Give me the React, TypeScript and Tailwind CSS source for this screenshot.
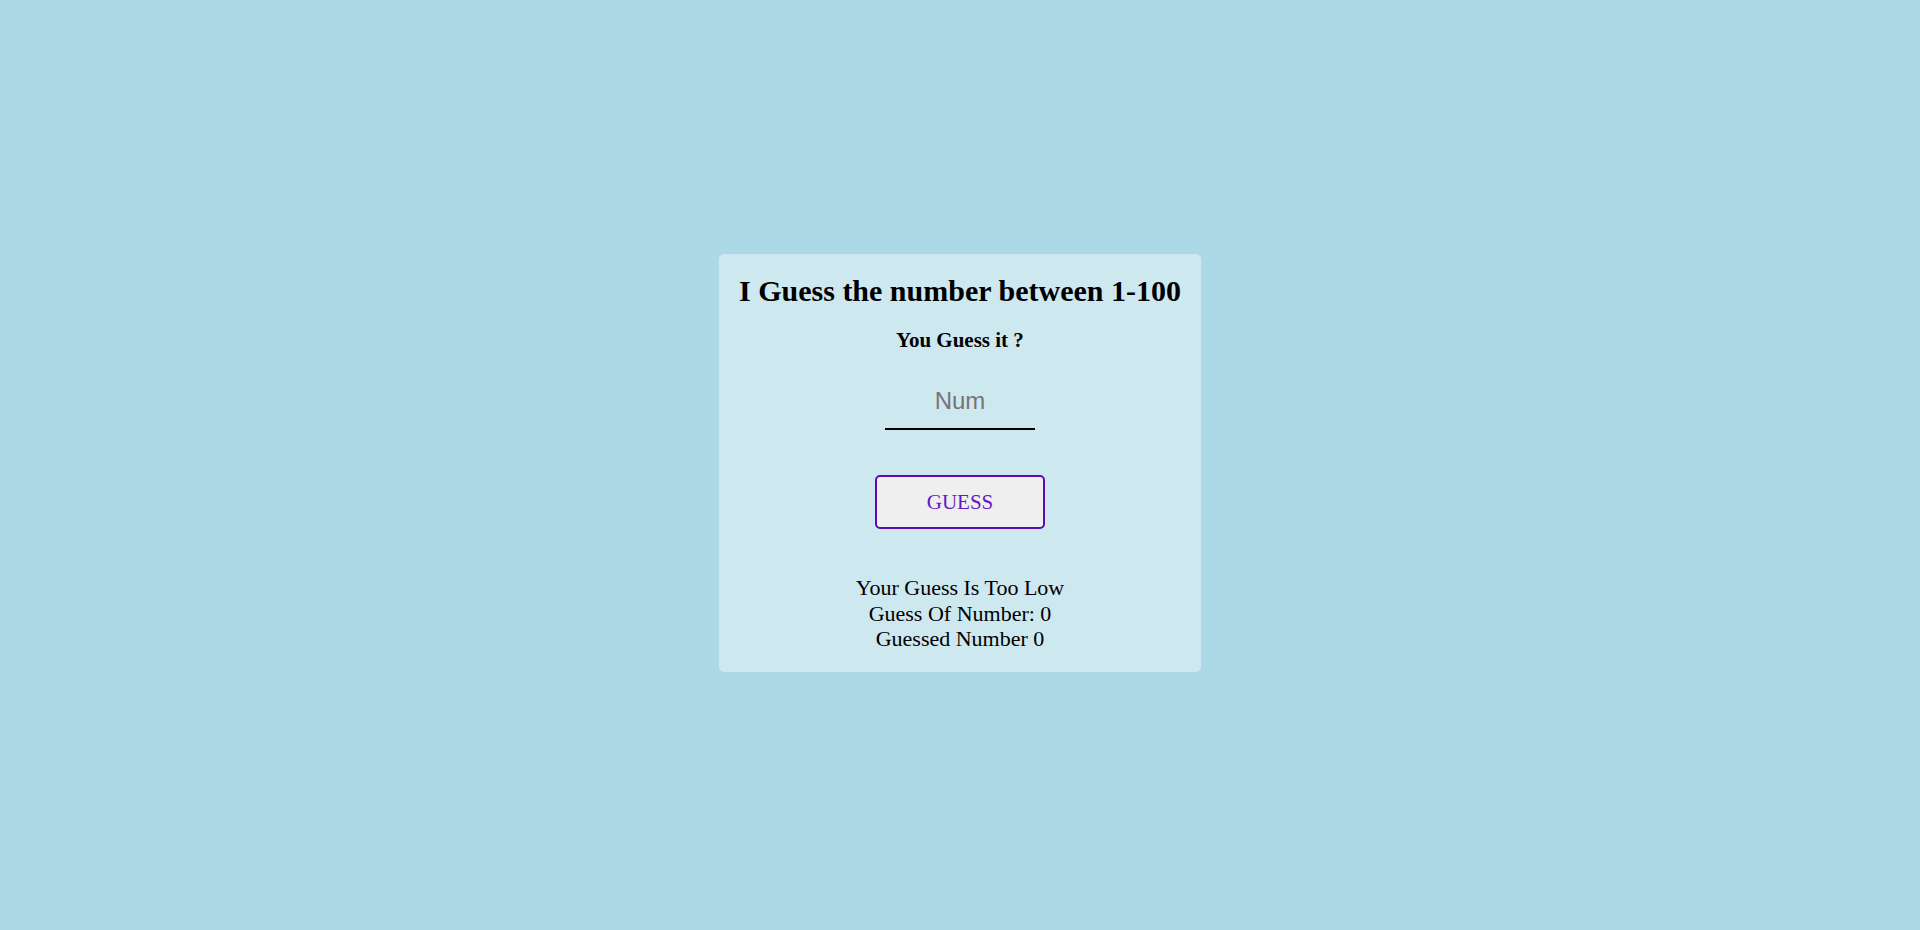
import React, { useState } from 'react';

const serif = "font-['Liberation_Serif','Times_New_Roman',serif]";

const App: React.FC = () => {
    const [value, setValue] = useState('');
    const [message] = useState('Your Guess Is Too Low');
    const [count] = useState(0);
    const [guessed] = useState(0);

    return (
        <div className="min-h-screen w-full bg-[#add8e6] flex items-center justify-center pb-1">
            <div className={`w-fit min-w-[481px] rounded-[5px] bg-[#cee8f0] px-5 pt-5 pb-[21px] flex flex-col items-center text-center text-black ${serif}`}>
                <h2 className="text-[30px] font-bold leading-[1.149] whitespace-nowrap">I Guess the number between 1-100</h2>
                <h4 className="mt-5 text-[21px] font-bold leading-[1.149]">You Guess it ?</h4>
                <input
                    type="number"
                    value={value}
                    onChange={(e) => setValue(e.target.value)}
                    placeholder="Num"
                    className="mt-[22px] w-[150px] h-[56px] p-0 border-0 border-b-2 border-black bg-transparent text-center text-[24px] font-['Liberation_Sans',Arial,sans-serif] placeholder:text-[#757575] outline-none [appearance:textfield] [&::-webkit-inner-spin-button]:appearance-none"
                />
                <button className="mt-[45px] w-[170px] h-[54px] rounded-[5px] border-2 border-[#5a0db3] bg-[#efefef] text-[#6419c4] text-[21px] leading-none">
                    GUESS
                </button>
                <div className="mt-[46px] text-[22px] leading-[1.149]">
                    <div>{message}</div>
                    <div>Guess Of Number: {count}</div>
                    <div>Guessed Number {guessed}</div>
                </div>
            </div>
        </div>
    );
};

export default App;
